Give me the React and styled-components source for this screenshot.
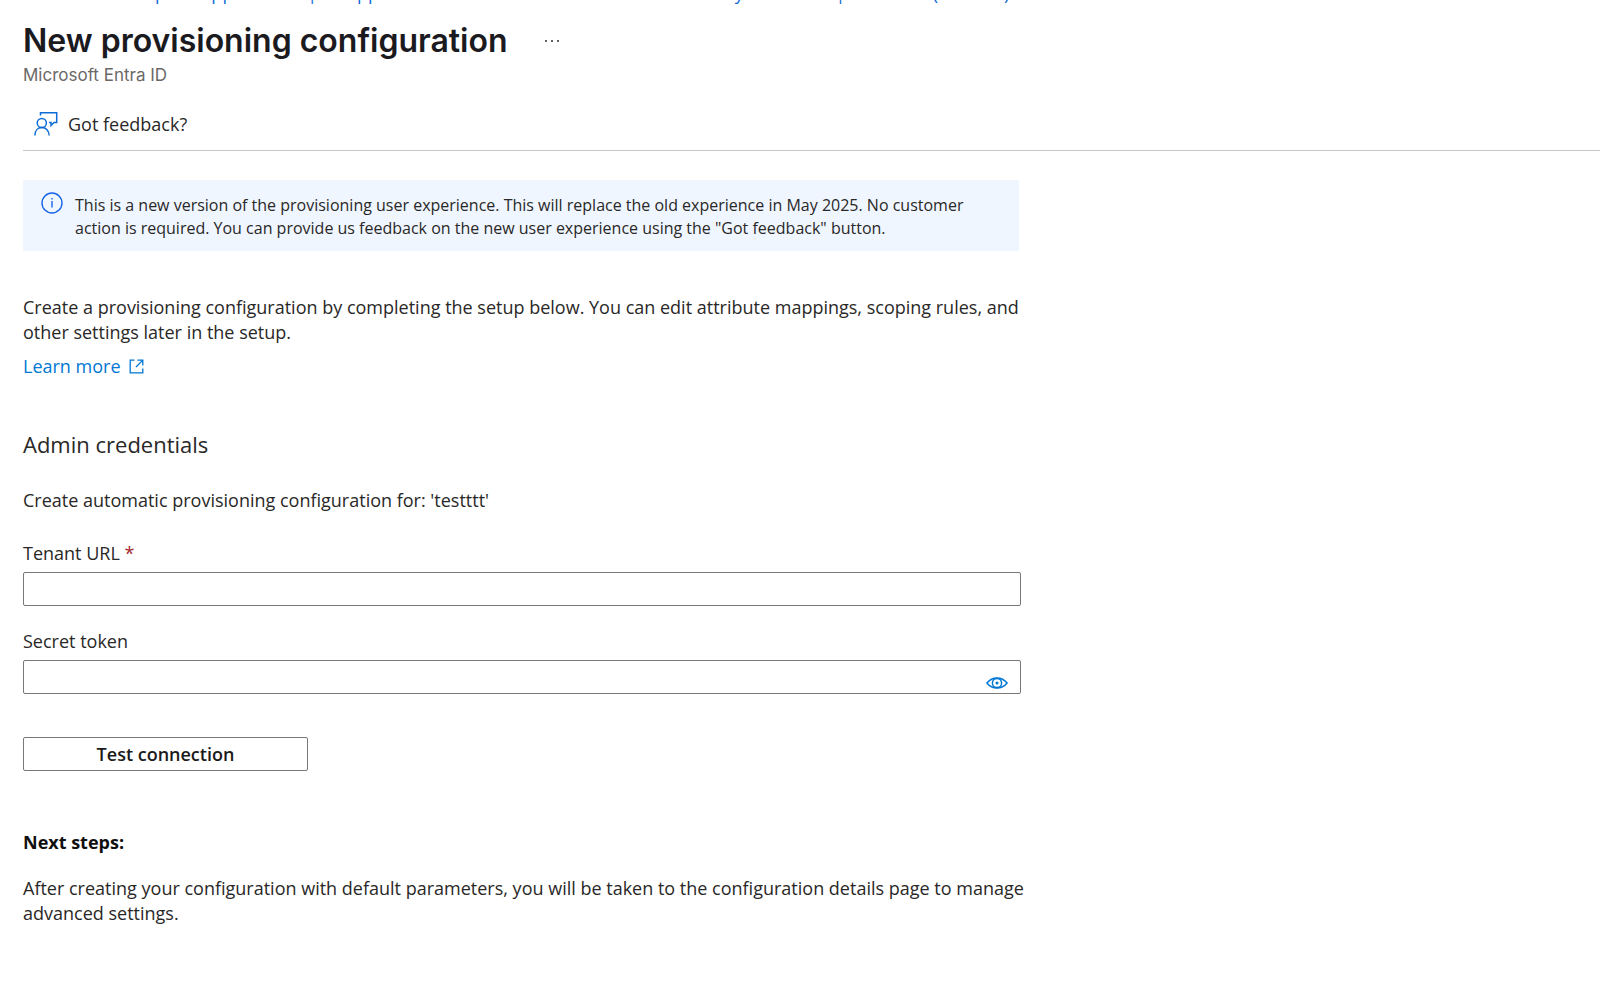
import React, { useState } from 'react';
import styled, { createGlobalStyle } from 'styled-components';

const GlobalStyle = createGlobalStyle`
  *, *::before, *::after {
    box-sizing: border-box;
  }

  body {
    margin: 0;
    background: #ffffff;
    color: #292827;
    font-family: 'Segoe UI', 'Open Sans', 'Noto Sans', sans-serif;
    font-size: 18px;
    line-height: 25px;
  }
`;

const Page = styled.div`
  padding-left: 23px;
`;

const BreadcrumbClip = styled.nav`
  display: flex;
  align-items: flex-end;
  height: 5px;
  overflow: hidden;
  line-height: 24px;
  white-space: nowrap;
`;

const Crumb = styled.a`
  color: #0f6cd6;
  text-decoration: none;
`;

const CrumbArrow = styled.span`
  margin: 0 13px;
  color: #605e5c;
`;

const TitleRow = styled.header`
  display: flex;
  align-items: center;
  gap: 36px;
  height: 48px;
  margin-top: 12px;
`;

const Title = styled.h1`
  margin: 0;
  color: #1b1a1f;
  font-family: Inter, sans-serif;
  font-size: 32px;
  font-weight: 600;
  line-height: 48px;
`;

const MoreButton = styled.button`
  display: flex;
  padding: 0;
  border: 0;
  background: none;
  color: #323130;
  cursor: pointer;
`;

const Subtitle = styled.p`
  margin: 0;
  color: #6b6967;
  font-family: Inter, sans-serif;
  font-size: 17px;
  line-height: 20px;
`;

const Toolbar = styled.div`
  display: flex;
  align-items: center;
  height: 51px;
  margin-top: 15px;
  padding: 0 0 2px 11px;
  border-bottom: 1px solid #c8c6c4;
`;

const ToolbarButton = styled.button`
  display: flex;
  align-items: center;
  gap: 10px;
  padding: 0;
  border: 0;
  background: none;
  color: inherit;
  font: inherit;
  cursor: pointer;
`;

const Content = styled.main`
  max-width: 1010px;
  padding-bottom: 40px;
`;

const InfoBanner = styled.div`
  display: flex;
  gap: 12px;
  max-width: 996px;
  margin-top: 29px;
  padding: 12px 12px 11px 18px;
  background: #f0f6ff;

  svg {
    flex: none;
  }
`;

const BannerText = styled.p`
  margin: 2px 0 0;
  font-size: 16px;
  line-height: 23px;
`;

const Text = styled.p`
  margin: ${props => props.$top}px 0 0;
`;

const LearnMore = styled.a`
  display: inline-flex;
  align-items: center;
  gap: 8px;
  margin-top: 9px;
  color: #0078d4;
  text-decoration: none;
`;

const SectionTitle = styled.h2`
  margin: 49px 0 0;
  font-size: 22px;
  font-weight: 400;
  line-height: 32px;
`;

const Field = styled.div`
  max-width: 998px;
  margin-top: ${props => props.$top}px;
`;

const Label = styled.label`
  display: block;
  margin-bottom: 6px;
`;

const Required = styled.span`
  color: #a4262c;
`;

const InputBox = styled.div`
  display: flex;
  height: 34px;
  border: 1px solid #7a7876;
  border-radius: 2px;
`;

const Input = styled.input`
  flex: 1;
  min-width: 0;
  padding: 0 10px;
  border: 0;
  outline: 0;
  background: none;
  font: inherit;
`;

const RevealButton = styled.button`
  display: flex;
  align-items: flex-end;
  padding: 0 12px 4px;
  border: 0;
  background: none;
  color: #0078d4;
  cursor: pointer;
`;

const TestButton = styled.button`
  display: block;
  width: 285px;
  height: 34px;
  margin-top: 43px;
  padding: 0;
  border: 1px solid #7a7876;
  border-radius: 2px;
  background: #ffffff;
  color: #1b1a19;
  font: inherit;
  font-weight: 600;
  cursor: pointer;
`;

const NextSteps = styled.h3`
  margin: 59px 0 0;
  color: #11100f;
  font-size: 18px;
  font-weight: 700;
  line-height: 25px;
`;

const FeedbackIcon = () => (
  <svg width="24" height="24" viewBox="0 0 24 24" fill="none" stroke="#0f6cd6" strokeWidth="1.5" aria-hidden="true">
    <path d="M6.5 3.5V.8H22.7V10.5H20l-3 3v-3h-2" />
    <circle cx="7.8" cy="11" r="4.6" />
    <path d="M.9 23.5c0-4.9 3-7.9 7-7.9s7.2 3 7.2 7.9" />
  </svg>
);

const InfoIcon = () => (
  <svg width="22" height="22" viewBox="0 0 22 22" fill="none" stroke="#1664e8" strokeWidth="1.4" aria-hidden="true">
    <circle cx="11" cy="11" r="10" />
    <path d="M11 9v6.5M11 6v1.6" />
  </svg>
);

const ExternalIcon = () => (
  <svg width="15" height="15" viewBox="0 0 15 15" fill="none" stroke="currentColor" strokeWidth="1.3" aria-hidden="true">
    <path d="M5.5 1.2H1.2v12.600h12.600V9.500" />
    <path d="M8.5 1.2h5.300v5.300M13.600 1.400L7 8" />
  </svg>
);

const EyeIcon = () => (
  <svg width="22" height="12" viewBox="0 0 22 12" fill="none" stroke="currentColor" strokeWidth="1.5" aria-hidden="true">
    <path d="M.9 6C3.5 2.8 7 .9 11 .9S18.5 2.8 21.1 6C18.5 9.2 15 11.1 11 11.1S3.5 9.2.9 6Z" />
    <circle cx="11" cy="6" r="4.6" />
    <circle cx="11" cy="6" r="1.5" fill="currentColor" stroke="none" />
  </svg>
);

const DotsIcon = () => (
  <svg width="16" height="4" viewBox="0 0 16 4" fill="currentColor" aria-hidden="true">
    <circle cx="2" cy="2" r="1" />
    <circle cx="8" cy="2" r="1" />
    <circle cx="14" cy="2" r="1" />
  </svg>
);

const crumbs = [
  'Home',
  'Enterprise applications | All applications',
  'Browse Microsoft Entra Gallery',
  'testttt | Overview (Preview)',
];

const App = () => {
  const [showToken, setShowToken] = useState(false);

  return (
    <>
      <GlobalStyle />
      <Page>
        <BreadcrumbClip aria-label="Breadcrumb">
          {crumbs.map(crumb => (
            <React.Fragment key={crumb}>
              <Crumb href="#">{crumb}</Crumb>
              <CrumbArrow>&gt;</CrumbArrow>
            </React.Fragment>
          ))}
        </BreadcrumbClip>
        <TitleRow>
          <Title>New provisioning configuration</Title>
          <MoreButton type="button" aria-label="More options">
            <DotsIcon />
          </MoreButton>
        </TitleRow>
        <Subtitle>Microsoft Entra ID</Subtitle>
        <Toolbar>
          <ToolbarButton type="button">
            <FeedbackIcon />
            Got feedback?
          </ToolbarButton>
        </Toolbar>
        <Content>
          <InfoBanner>
            <InfoIcon />
            <BannerText>
              This is a new version of the provisioning user experience. This will replace the old experience in May
              2025. No customer action is required. You can provide us feedback on the new user experience using the
              "Got feedback" button.
            </BannerText>
          </InfoBanner>
          <Text $top={44}>
            Create a provisioning configuration by completing the setup below. You can edit attribute mappings, scoping
            rules, and other settings later in the setup.
          </Text>
          <LearnMore href="#">
            Learn more
            <ExternalIcon />
          </LearnMore>
          <SectionTitle>Admin credentials</SectionTitle>
          <Text $top={28}>Create automatic provisioning configuration for: 'testttt'</Text>
          <Field $top={28}>
            <Label htmlFor="tenant-url">
              Tenant URL <Required>*</Required>
            </Label>
            <InputBox>
              <Input id="tenant-url" type="text" required />
            </InputBox>
          </Field>
          <Field $top={23}>
            <Label htmlFor="secret-token">Secret token</Label>
            <InputBox>
              <Input id="secret-token" type={showToken ? 'text' : 'password'} />
              <RevealButton type="button" aria-label="Show secret token" onClick={() => setShowToken(!showToken)}>
                <EyeIcon />
              </RevealButton>
            </InputBox>
          </Field>
          <TestButton type="button">Test connection</TestButton>
          <NextSteps>Next steps:</NextSteps>
          <Text $top={21}>
            After creating your configuration with default parameters, you will be taken to the configuration details
            page to manage advanced settings.
          </Text>
        </Content>
      </Page>
    </>
  );
};

export default App;
